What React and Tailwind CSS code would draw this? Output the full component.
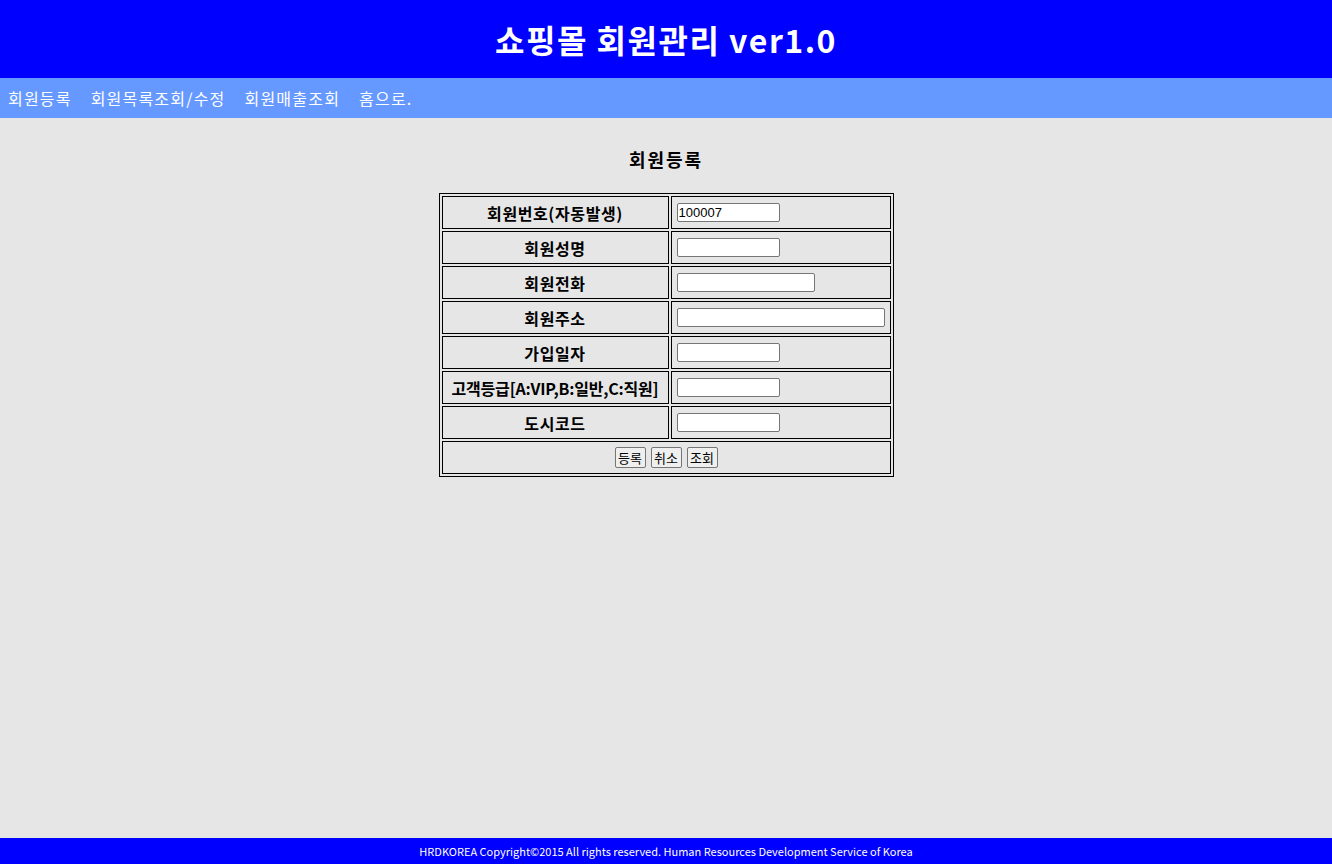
import React from 'react';

const rows = [
    { label: '회원번호(자동발생)', value: '100007', width: 'w-[103px]', track: 'tracking-[0.6px]' },
    { label: '회원성명', value: '', width: 'w-[103px]', track: 'tracking-[0.6px]' },
    { label: '회원전화', value: '', width: 'w-[138px]', track: 'tracking-[0.6px]' },
    { label: '회원주소', value: '', width: 'w-[208px]', track: 'tracking-[0.6px]' },
    { label: '가입일자', value: '', width: 'w-[103px]', track: 'tracking-[0.6px]' },
    { label: '고객등급[A:VIP,B:일반,C:직원]', value: '', width: 'w-[103px]', track: 'tracking-[-0.2px]' },
    { label: '도시코드', value: '', width: 'w-[103px]', track: 'tracking-[0.6px]' },
];

const font = "font-['Noto_Sans_CJK_KR','Malgun_Gothic',sans-serif]";

const App = () => {
    return (
        <div className={`h-screen flex flex-col ${font}`}>
            <header className="h-[78px] shrink-0 bg-[#0000ff] flex items-center justify-center">
                <h1 className="text-white text-[32px] font-bold leading-none tracking-[1.5px]">쇼핑몰 회원관리 ver1.0</h1>
            </header>

            <nav className="h-[40px] shrink-0 bg-[#6699ff] flex items-center pl-2 gap-[19px] text-white text-[16px] tracking-[1.2px]">
                <a>회원등록</a>
                <a>회원목록조회/수정</a>
                <a>회원매출조회</a>
                <a>홈으로.</a>
            </nav>

            <main className="flex-1 bg-[#e6e6e6] flex flex-col items-center">
                <h2 className="mt-[28px] mb-[21px] text-[18px] font-bold leading-[26px] tracking-[2px]">회원등록</h2>
                <table className="border border-black border-separate border-spacing-[2px] text-[16px]">
                    <tbody>
                        {rows.map((r) => (
                            <tr key={r.label}>
                                <th className={`w-[227px] h-[33px] border border-black font-bold text-center p-0 whitespace-nowrap ${r.track}`}>{r.label}</th>
                                <td className="w-[220px] h-[33px] border border-black px-[5px] py-0 align-middle">
                                    <input
                                        type="text"
                                        defaultValue={r.value}
                                        className={`${r.width} block h-[19px] bg-white border border-[#767676] rounded-[2px] px-[1px] text-[13px] font-['Liberation_Sans',Arial,sans-serif] text-black`}
                                    />
                                </td>
                            </tr>
                        ))}
                        <tr>
                            <td colSpan={2} className="h-[33px] border border-black text-center p-0">
                                <div className="flex justify-center gap-[5px]">
                                    {['등록', '취소', '조회'].map((b) => (
                                        <button key={b} className="w-[31px] h-[21px] px-0 text-[13px] leading-none bg-[#efefef] border border-[#767676] rounded-[2px]">{b}</button>
                                    ))}
                                </div>
                            </td>
                        </tr>
                    </tbody>
                </table>
            </main>

            <footer className="h-[26px] shrink-0 bg-[#0000ff] flex items-center justify-center">
                <p className="text-white text-[11px]">HRDKOREA Copyright&copy;2015 All rights reserved. Human Resources Development Service of Korea</p>
            </footer>
        </div>
    );
};

export default App;
